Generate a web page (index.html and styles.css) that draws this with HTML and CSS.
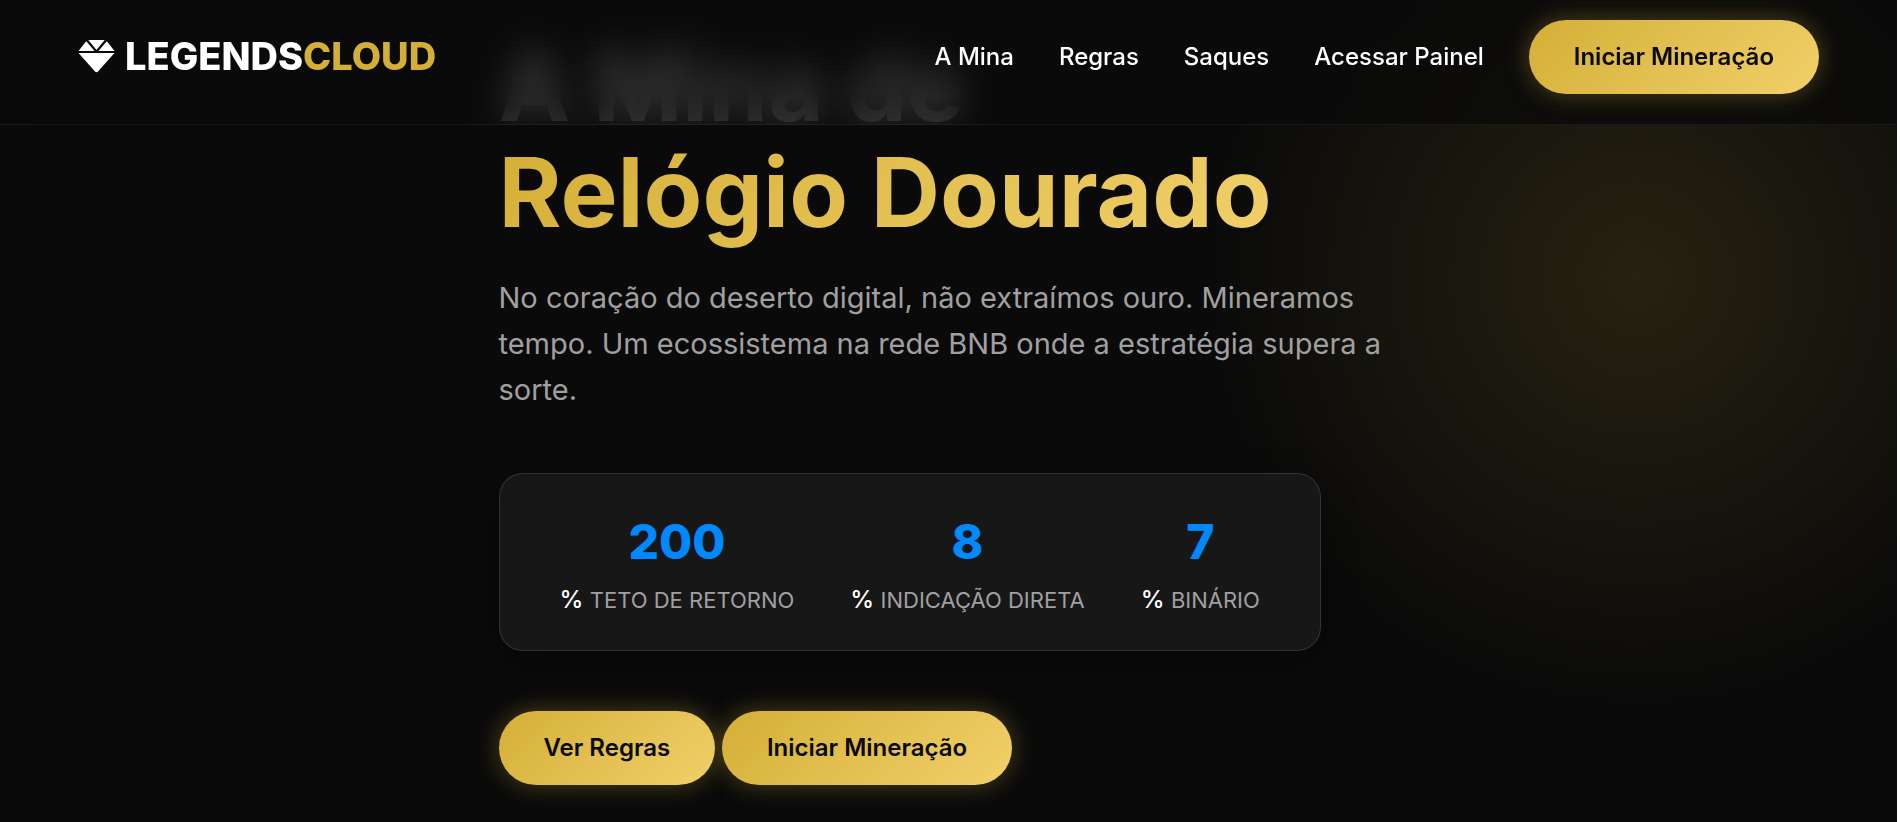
FILE: index.html
```html
<!DOCTYPE html>
<html lang="pt-BR">
<head>
<meta charset="utf-8">
<meta name="viewport" content="width=device-width, initial-scale=1">
<title>Legends Cloud</title>
<link rel="stylesheet" href="styles.css">
</head>
<body>
<header class="navbar">
  <a class="logo" href="#">
    <svg class="logo-icon" viewBox="0 0 37 33" aria-hidden="true">
      <path d="M8.500 1.500 16.500 11H0.500L7.500 2ZM10.300 0H26.700L18.500 10ZM28.500 1.500 29.500 2 36.500 11H20.500ZM0.500 13H36.500L20 31.500Q18.500 33 17 31.500Z"/>
    </svg>
    <span>LEGENDS<span class="logo-accent">CLOUD</span></span>
  </a>
  <nav class="menu">
    <a class="menu-link" href="#mina">A Mina</a>
    <a class="menu-link" href="#regras">Regras</a>
    <a class="menu-link" href="#saques">Saques</a>
    <a class="menu-link" href="#painel">Acessar Painel</a>
    <a class="btn" href="#iniciar">Iniciar Mineração</a>
  </nav>
</header>
<main class="hero">
  <div class="hero-content">
    <h1 class="title">A Mina de<br><span class="title-gold">Relógio Dourado</span></h1>
    <p class="subtitle">No coração do deserto digital, não extraímos ouro. Mineramos tempo. Um ecossistema na rede BNB onde a estratégia supera a sorte.</p>
    <div class="stats">
      <div class="stat"><span class="stat-number">200</span><span>% <span class="stat-label">Teto de Retorno</span></span></div>
      <div class="stat"><span class="stat-number">8</span><span>% <span class="stat-label">Indicação Direta</span></span></div>
      <div class="stat"><span class="stat-number">7</span><span>% <span class="stat-label">Binário</span></span></div>
    </div>
    <div class="actions">
      <a class="btn" href="#regras">Ver Regras</a>
      <a class="btn" href="#iniciar">Iniciar Mineração</a>
    </div>
  </div>
</main>
</body>
</html>
```
FILE: styles.css
```css
* {
  box-sizing: border-box;
  margin: 0;
  padding: 0;
}

body {
  border-right: 3px solid #fff;
  background: #0a0a0a;
  color: #fff;
  font-family: Inter, "Liberation Sans", sans-serif;
  font-size: 24px;
  line-height: 38px;
}

a {
  color: inherit;
  text-decoration: none;
}

.navbar {
  position: fixed;
  top: 0;
  left: 0;
  right: 3px;
  z-index: 10;
  display: flex;
  align-items: center;
  justify-content: space-between;
  padding: 20px 78px 30px;
  background: rgba(10, 10, 10, 0.8);
  border-bottom: 1px solid rgba(255, 255, 255, 0.06);
  backdrop-filter: blur(18px);
}

.logo {
  display: flex;
  align-items: center;
  gap: 10px;
  padding-bottom: 2px;
  font-size: 38px;
  font-weight: 800;
}

.logo-icon {
  width: 37px;
  height: 33px;
  fill: #fff;
}

.logo-accent {
  color: #d4af37;
}

.menu {
  display: flex;
  align-items: center;
  gap: 45px;
}

.menu-link {
  font-weight: 500;
}

.btn {
  display: inline-block;
  padding: 18px 45px;
  border-radius: 75px;
  background: linear-gradient(135deg, #d4af37, #f1d06a);
  box-shadow: 0 0 24px rgba(212, 175, 55, 0.35);
  color: #0a0a0a;
  font-weight: 600;
}

.hero {
  display: flex;
  align-items: center;
  justify-content: center;
  min-height: 100vh;
  padding-bottom: 4px;
  background: radial-gradient(circle 430px at right 260px top 277px, rgba(212, 175, 55, 0.14), transparent);
}

.hero-content {
  width: 100%;
  max-width: 900px;
}

.title {
  margin-bottom: 30px;
  font-size: 96px;
  font-weight: 700;
  line-height: 106px;
}

.title-gold {
  background: linear-gradient(135deg, #d4af37, #f1d06a);
  background-clip: text;
  -webkit-background-clip: text;
  color: transparent;
}

.subtitle {
  margin-bottom: 60px;
  color: #a0a0a0;
  font-size: 29px;
  line-height: 46px;
}

.stats {
  display: inline-flex;
  gap: 56px;
  margin-bottom: 60px;
  padding: 30px 60px;
  border: 1px solid rgba(255, 255, 255, 0.12);
  border-radius: 24px;
  background: #171717;
  box-shadow: 0 12px 36px rgba(0, 0, 0, 0.3);
  vertical-align: top;
}

.stat {
  text-align: center;
  font-weight: 500;
}

.stat-number {
  display: block;
  color: #0088ff;
  font-size: 48px;
  font-weight: 800;
  line-height: 76px;
}

.stat-label {
  color: #a0a0a0;
  font-size: 22px;
  font-weight: 400;
  line-height: 40px;
  text-transform: uppercase;
}
```
